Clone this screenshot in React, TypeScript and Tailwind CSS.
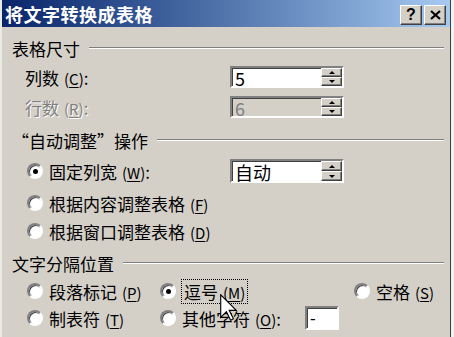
import * as React from "react";

const cjk = "font-['Noto_Sans_CJK_SC','Noto_Sans',sans-serif]";

function Acc({ k }: { k: string }) {
  return (
    <span className="ml-[5px] text-[15px]">
      (<span className="underline underline-offset-2">{k}</span>)
    </span>
  );
}

function Radio({ checked = false }: { checked?: boolean }) {
  return (
    <span className="flex h-[16px] w-[16px] shrink-0 items-center justify-center rounded-full border-2 border-t-[#808080] border-l-[#808080] border-b-white border-r-white bg-white shadow-[inset_1px_1px_0_#404040]">
      {checked && <span className="h-[5px] w-[5px] rounded-full bg-black" />}
    </span>
  );
}

function SpinButton({ up }: { up?: boolean }) {
  return (
    <div className="flex flex-1 items-center justify-center border border-t-white border-l-white border-b-[#404040] border-r-[#404040] bg-[#d4d0c8] shadow-[inset_-1px_-1px_0_#808080]">
      <svg width="6" height="3" viewBox="0 0 6 3">
        {up ? <path d="M0 3 L3 0 L6 3 Z" fill="#000" /> : <path d="M0 0 L3 3 L6 0 Z" fill="#000" />}
      </svg>
    </div>
  );
}

function SpinBox({ value, disabled = false, h = "h-[22px]" }: { value: string; disabled?: boolean; h?: string }) {
  return (
    <div
      className={`flex w-[114px] ${h} border-2 border-t-[#808080] border-l-[#808080] border-b-white border-r-white shadow-[inset_1px_1px_0_#404040] ${
        disabled ? "bg-[#d4d0c8]" : "bg-white"
      }`}
    >
      <div
        className={`flex flex-1 items-center pl-[3px] pt-px text-[18px] leading-none ${
          disabled ? "text-[#808080]" : "text-black"
        }`}
      >
        {value}
      </div>
      <div className="flex w-[21px] flex-col">
        <SpinButton up />
        <SpinButton />
      </div>
    </div>
  );
}

function Section({ title, mt }: { title: string; mt: string }) {
  return (
    <div className={`flex h-[22px] items-center pl-[10px] pr-[6px] ${mt}`}>
      <span className="text-[17px] leading-none">{title}</span>
      <div className="ml-[9px] flex-1 border-t border-b border-t-[#808080] border-b-white" />
    </div>
  );
}

function Cursor() {
  return (
    <svg
      className="absolute left-[220px] top-[294px]"
      width="17"
      height="27"
      viewBox="0 0 12 19"
    >
      <path
        d="M0.5 0.5 L0.5 16.5 L4.5 12.5 L7.5 18.5 L9.5 17.5 L6.5 11.5 L11.5 11.5 Z"
        fill="#fff"
        stroke="#000"
        strokeWidth="0.8"
      />
    </svg>
  );
}

export default function App() {
  return (
    <div className={`relative h-[337px] w-[454px] overflow-hidden bg-[#f2f2f2] ${cjk}`}>
      <div className="flex h-[360px] w-[451px] flex-col border-l-2 border-r border-l-[#ebe9e4] border-r-[#404040] bg-[#d4d0c8] text-black">
        {/* title bar */}
        <div className="flex h-[27px] items-center bg-linear-to-r from-[#0a246a] to-[#a6caf0] pl-[3px] pr-[4px]">
          <span className="text-[18px] font-bold leading-none tracking-[0.5px] text-white">将文字转换成表格</span>
          <div className="ml-auto flex gap-[2px] pt-[2px]">
            <div className="flex h-[20px] w-[22px] items-center justify-center border border-t-white border-l-white border-b-[#404040] border-r-[#404040] bg-[#d4d0c8] shadow-[inset_-1px_-1px_0_#808080]">
              <span className="font-['Liberation_Sans',sans-serif] text-[16px] font-bold leading-none">?</span>
            </div>
            <div className="flex h-[20px] w-[22px] items-center justify-center border border-t-white border-l-white border-b-[#404040] border-r-[#404040] bg-[#d4d0c8] shadow-[inset_-1px_-1px_0_#808080]">
              <svg width="11" height="10" viewBox="0 0 11 10">
                <path d="M1 1 L10 9 M10 1 L1 9" stroke="#000" strokeWidth="2.2" />
              </svg>
            </div>
          </div>
        </div>

        {/* 表格尺寸 */}
        <Section title="表格尺寸" mt="mt-[10px]" />
        <div className="mt-[7px] flex h-[22px] items-center pl-[23px]">
          <span className="w-[205px] text-[17px] leading-none">
            列数<Acc k="C" />:
          </span>
          <SpinBox value="5" />
        </div>
        <div className="mt-[8px] flex h-[22px] items-center pl-[23px]">
          <span className="w-[205px] text-[17px] leading-none text-[#808080] [text-shadow:1px_1px_0_#fff]">
            行数<Acc k="R" />:
          </span>
          <SpinBox value="6" disabled />
        </div>

        {/* 自动调整 */}
        <Section title="“自动调整”操作" mt="mt-[11px]" />
        <div className="mt-[8px] flex h-[24px] items-center pl-[25px]">
          <div className="flex w-[203px] items-center gap-[6px]">
            <Radio checked />
            <span className="text-[17px] leading-none">
              固定列宽<Acc k="W" />:
            </span>
          </div>
          <SpinBox value="自动" h="h-[24px]" />
        </div>
        <div className="mt-[8px] flex h-[24px] items-center gap-[6px] pl-[25px]">
          <Radio />
          <span className="text-[17px] leading-none">
            根据内容调整表格<Acc k="F" />
          </span>
        </div>
        <div className="mt-[4px] flex h-[24px] items-center gap-[6px] pl-[25px]">
          <Radio />
          <span className="text-[17px] leading-none">
            根据窗口调整表格<Acc k="D" />
          </span>
        </div>

        {/* 文字分隔位置 */}
        <Section title="文字分隔位置" mt="mt-[9px]" />
        <div className="mt-[5px] flex h-[24px] items-center pl-[25px]">
          <div className="flex w-[133px] items-center gap-[6px]">
            <Radio />
            <span className="text-[17px] leading-none">
              段落标记<Acc k="P" />
            </span>
          </div>
          <div className="flex w-[194px] items-center gap-[5px]">
            <Radio checked />
            <span className="border border-dotted border-black px-[2px] py-[3px] text-[17px] leading-none">
              逗号<Acc k="M" />
            </span>
          </div>
          <div className="flex items-center gap-[6px]">
            <Radio />
            <span className="text-[17px] leading-none">
              空格<Acc k="S" />
            </span>
          </div>
        </div>
        <div className="mt-[3px] flex h-[24px] items-center pl-[25px]">
          <div className="flex w-[133px] items-center gap-[6px]">
            <Radio />
            <span className="text-[17px] leading-none">
              制表符<Acc k="T" />
            </span>
          </div>
          <div className="flex items-center gap-[6px]">
            <Radio />
            <span className="w-[117px] text-[17px] leading-none">
              其他字符<Acc k="O" />:
            </span>
            <div className="flex h-[24px] w-[34px] items-center border-2 border-t-[#808080] border-l-[#808080] border-b-white border-r-white bg-white pl-[3px] font-['Liberation_Sans',sans-serif] text-[17px] leading-none shadow-[inset_1px_1px_0_#404040]">
              -
            </div>
          </div>
        </div>
      </div>
      <Cursor />
    </div>
  );
}
